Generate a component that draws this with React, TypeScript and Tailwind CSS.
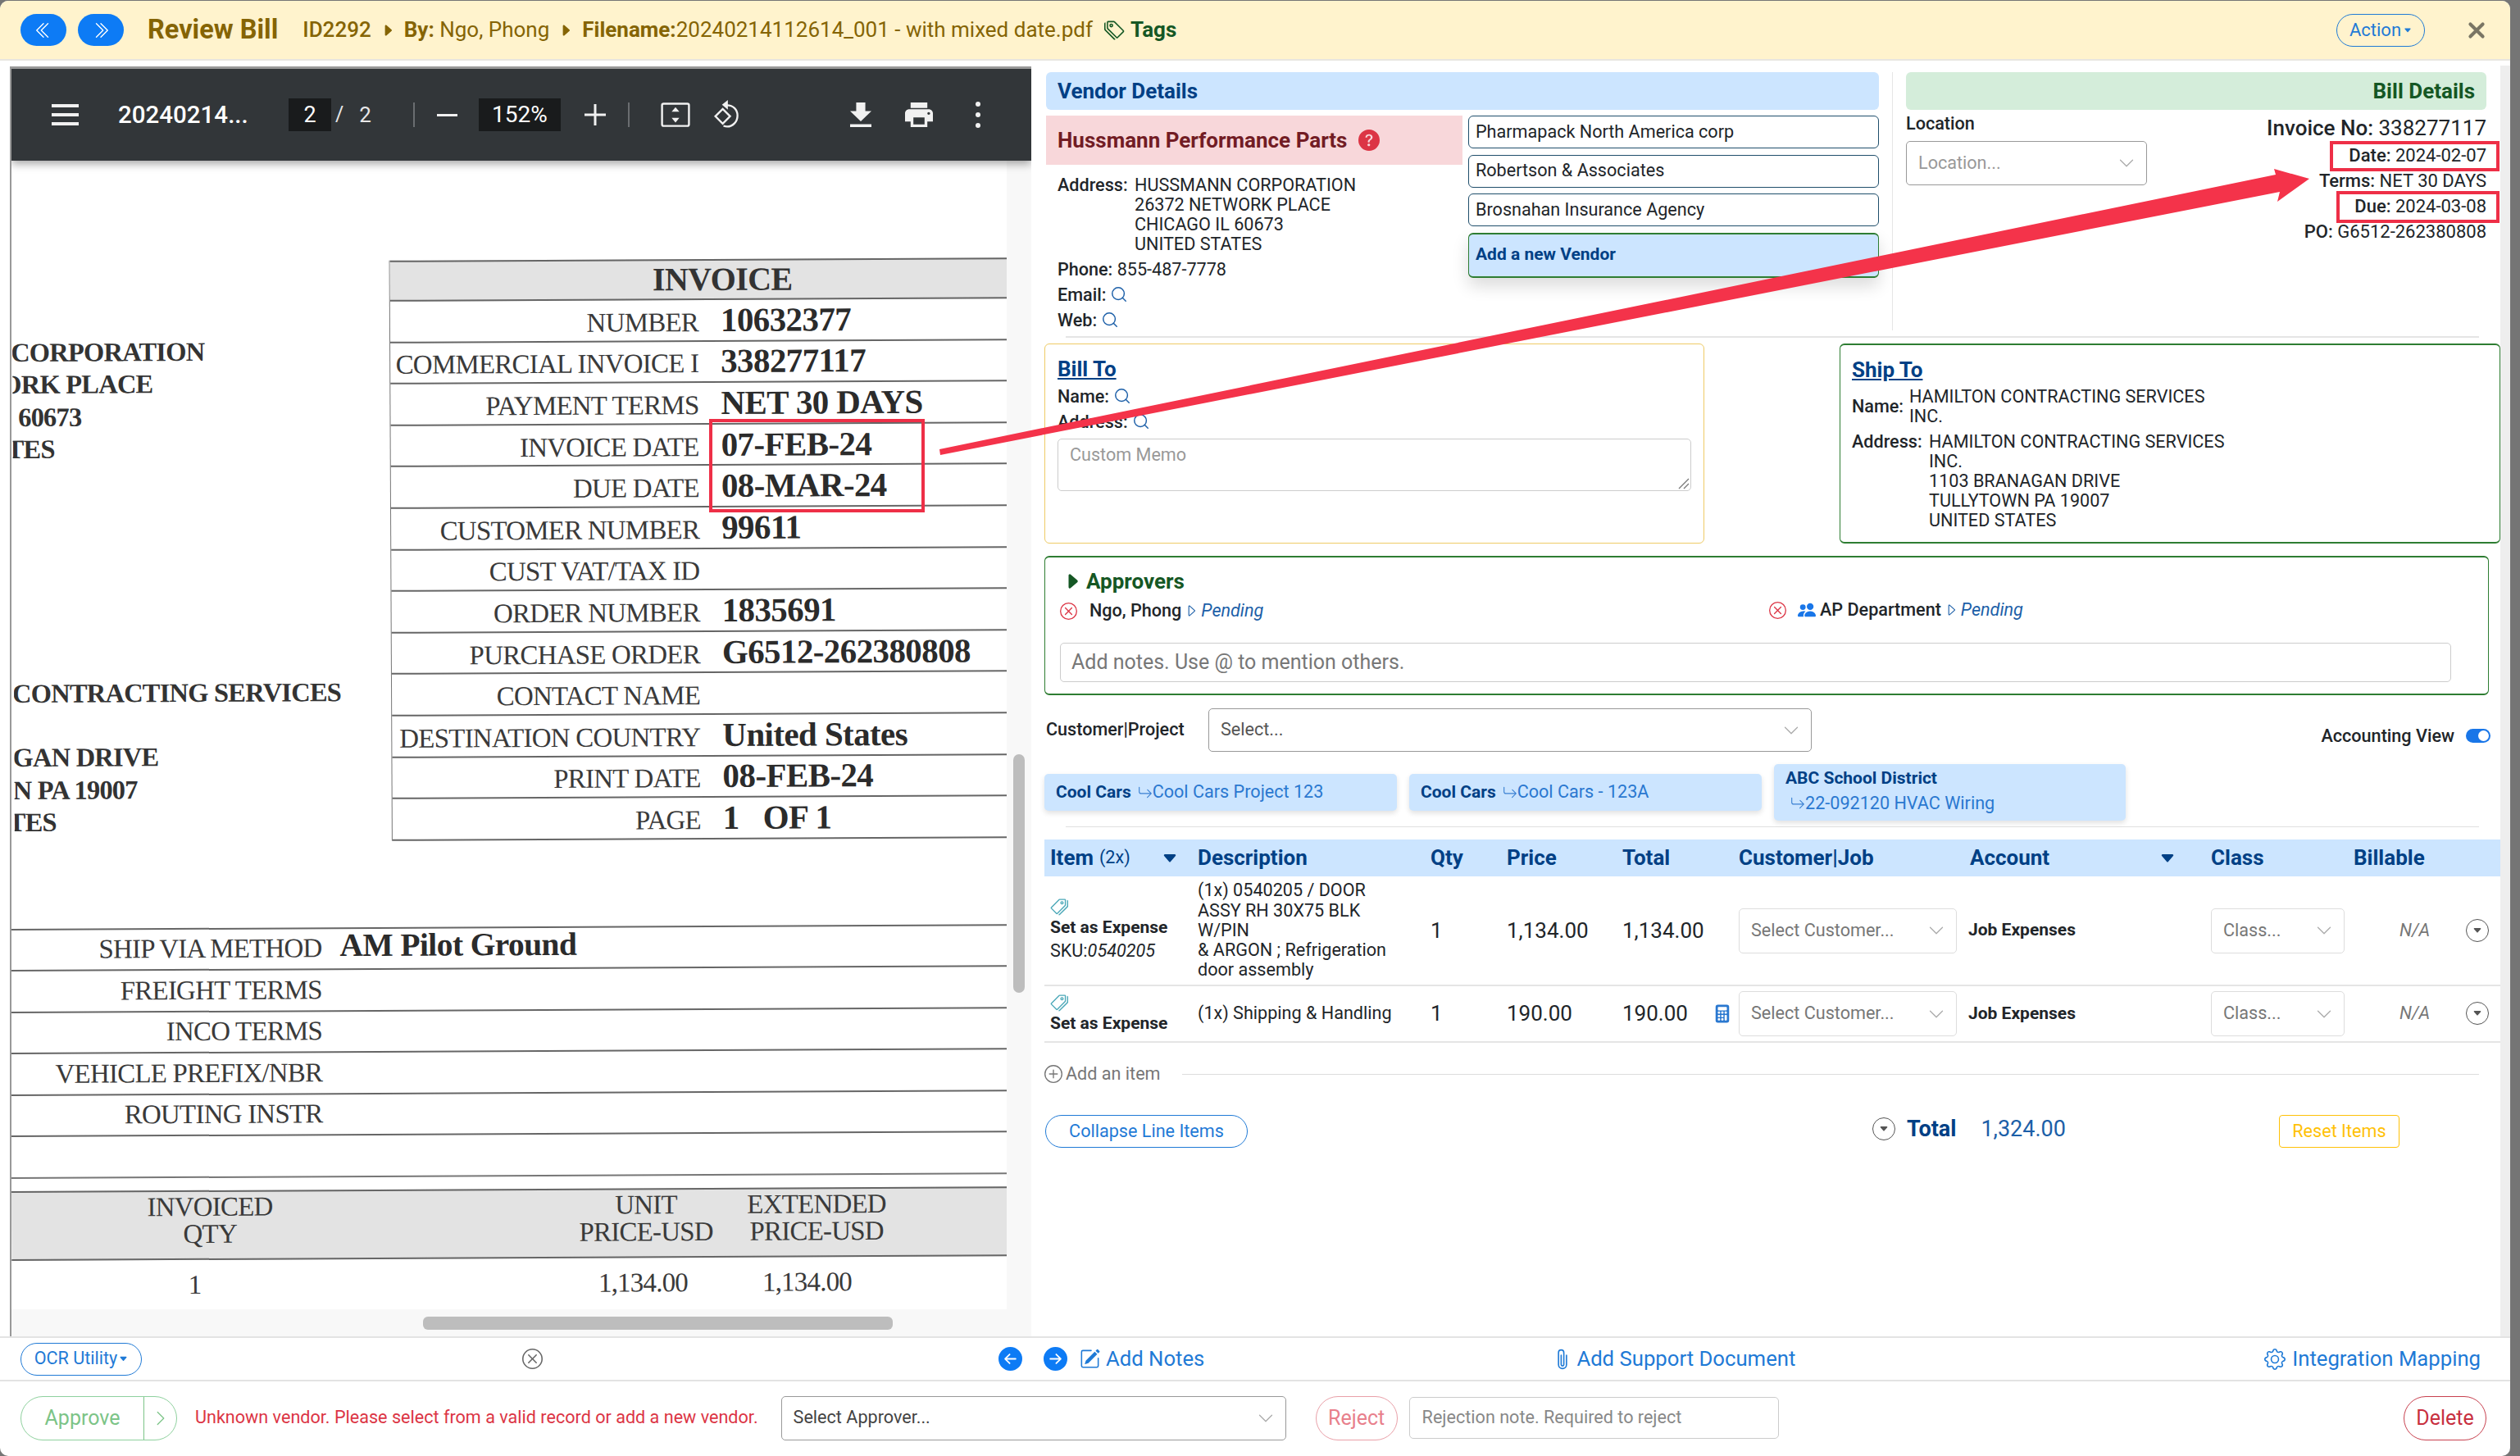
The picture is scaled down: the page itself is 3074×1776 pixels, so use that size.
import React from "react";
import {
  BsChevronDoubleLeft, BsChevronDoubleRight, BsCaretRightFill, BsCaretRight, BsTags, BsCaretDownFill,
  BsQuestionCircleFill, BsChevronDown, BsChevronRight, BsXCircle, BsPeopleFill, BsArrowReturnRight,
  BsPlusCircle, BsCalculatorFill, BsArrowLeftCircleFill, BsArrowRightCircleFill, BsPencilSquare,
  BsPaperclip, BsGear, BsXLg,
} from "react-icons/bs";
import { Search } from "lucide-react";

const topRows: [string, string][] = [
  ["NUMBER", "10632377"],
  ["COMMERCIAL INVOICE I", "338277117"],
  ["PAYMENT TERMS", "NET 30 DAYS"],
  ["INVOICE DATE", "07-FEB-24"],
  ["DUE DATE", "08-MAR-24"],
  ["CUSTOMER NUMBER", "99611"],
  ["CUST VAT/TAX ID", ""],
  ["ORDER NUMBER", "1835691"],
  ["PURCHASE ORDER", "G6512-262380808"],
  ["CONTACT NAME", ""],
  ["DESTINATION COUNTRY", "United States"],
  ["PRINT DATE", "08-FEB-24"],
  ["PAGE", "1\u00a0\u00a0 OF 1"],
];
const shipRows: [string, string][] = [
  ["SHIP VIA METHOD", "AM Pilot Ground"],
  ["FREIGHT TERMS", ""],
  ["INCO TERMS", ""],
  ["VEHICLE PREFIX/NBR", ""],
  ["ROUTING INSTR", ""],
];

function Mag() {
  return <Search className="inline-block w-[22px] h-[22px] ml-[5px] text-[#1c5fa8] align-[-3px]" strokeWidth={1.6} />;
}

function CircleCaret({ className = "" }: { className?: string }) {
  return (
    <span className={"inline-flex items-center justify-center w-[28px] h-[28px] rounded-full border border-[#555] text-[#555] " + className}>
      <BsCaretDownFill className="w-[12px] h-[12px]" />
    </span>
  );
}

function SelectBox({ label, w, cls }: { label: string; w: string; cls?: string }) {
  return (
    <div className={"flex items-center justify-between bg-white rounded-[5px] pl-[14px] pr-[14px] " + w + " " + (cls ?? "")}>
      <span className="truncate">{label}</span>
      <BsChevronDown className="w-[20px] h-[20px] text-[#aaa] shrink-0" />
    </div>
  );
}

function Toolbar() {
  return (
    <div className="relative z-10 h-[112px] shrink-0 bg-[#323639] text-white flex items-center shadow-[0_4px_10px_rgba(0,0,0,0.35)]">
      <div className="ml-[49px] w-[33px] flex flex-col gap-[7px]">
        <span className="h-[4px] bg-[#f1f1f1]" />
        <span className="h-[4px] bg-[#f1f1f1]" />
        <span className="h-[4px] bg-[#f1f1f1]" />
      </div>
      <span className="ml-[48px] w-[160px] text-[29.500px] font-medium whitespace-nowrap">20240214...</span>
      <span className="ml-[48px] w-[52px] h-[40px] bg-[#191b1c] flex items-center justify-center text-[27px]">2</span>
      <span className="ml-[5px] text-[25px] text-[#e8e8e8]">/</span>
      <span className="ml-[19px] text-[26px] text-[#e8e8e8]">2</span>
      <span className="ml-[51px] w-[2px] h-[30px] bg-[#6a6d70]" />
      <span className="ml-[27px] w-[25px] h-[3px] bg-[#f1f1f1]" />
      <span className="ml-[26px] w-[100px] h-[40px] bg-[#191b1c] flex items-center justify-center text-[28px]">152%</span>
      <svg className="ml-[29px] w-[26px] h-[26px]" viewBox="0 0 26 26"><path d="M11.5 0h3v11.5H26v3H14.500V26h-3V14.500H0v-3h11.5z" fill="#f1f1f1" /></svg>
      <span className="ml-[27px] w-[2px] h-[30px] bg-[#6a6d70]" />
      <svg className="ml-[38px] w-[36px] h-[30px]" viewBox="0 0 38 32">
        <rect x="1.5" y="1.5" width="35" height="29" rx="2" fill="none" stroke="#f1f1f1" strokeWidth="2.6" />
        <path d="M19 6l5 6H14zM19 26l-5-6h10z" fill="#f1f1f1" />
      </svg>
      <svg className="ml-[27px] w-[36px] h-[36px]" viewBox="0 0 38 40">
        <path d="M3 22l10-10 10 10-10 10z" fill="none" stroke="#f1f1f1" strokeWidth="2.6" />
        <path d="M19 7c8 0 14 6 14 14s-6 15-14 15c-2 0-3-.3-5-1" fill="none" stroke="#f1f1f1" strokeWidth="2.6" />
        <path d="M20 0v13l-8-6.500z" fill="#f1f1f1" />
      </svg>
      <svg className="ml-[132px] w-[26px] h-[30px]" viewBox="5 3 14 17" preserveAspectRatio="none"><path d="M19 9h-4V3H9v6H5l7 7 7-7zM5 18v2h14v-2H5z" fill="#f1f1f1" /></svg>
      <svg className="ml-[41px] w-[34px] h-[30px]" viewBox="2 3 20 18" preserveAspectRatio="none"><path d="M19 8H5c-1.660 0-3 1.340-3 3v6h4v4h12v-4h4v-6c0-1.660-1.340-3-3-3zm-3 11H8v-5h8v5zm3-7c-.55 0-1-.45-1-1s.45-1 1-1 1 .45 1 1-.45 1-1 1zm-1-9H6v4h12V3z" fill="#f1f1f1" /></svg>
      <div className="ml-[52px] flex flex-col gap-[7px]">
        <span className="w-[6px] h-[6px] rounded-full bg-[#f1f1f1]" />
        <span className="w-[6px] h-[6px] rounded-full bg-[#f1f1f1]" />
        <span className="w-[6px] h-[6px] rounded-full bg-[#f1f1f1]" />
      </div>
    </div>
  );
}

function Scan() {
  const lab = "font-['Liberation_Serif',serif] text-[#3a3a3a] text-[33px] tracking-[-0.8px] leading-none";
  const val = "font-['Liberation_Serif',serif] font-bold text-[#2b2b2b] text-[41px] tracking-[-0.6px] leading-none";
  const left = "font-['Liberation_Serif',serif] font-bold text-[#333] text-[32.500px] tracking-[-0.8px] leading-[39.300px] whitespace-nowrap";
  return (
    <div className="flex-1 bg-white overflow-hidden h-[1401px]">
      <div className="origin-top-left rotate-[-0.27deg] w-[1240px]">
        <div className="pt-[124px] flex">
          <div className="w-[460px] shrink-0 overflow-hidden">
            <div className={"mt-[91px] -ml-[2px] " + left}>
              <div>CORPORATION</div>
              <div className="-ml-[12px]">ORK PLACE</div>
              <div className="-ml-[6px]">, 60673</div>
              <div className="-ml-[6px]">TES</div>
              <div className="mt-[259px]">CONTRACTING SERVICES</div>
              <div className="mt-[39px]">GAN DRIVE</div>
              <div>N PA 19007</div>
              <div className="-ml-[6px]">TES</div>
            </div>
          </div>
          <div className="w-[780px] border-l border-[#777]">
            <div className="h-[50px] bg-[#e3e3e3] border-y-2 border-[#666] flex items-center justify-center pl-[32px]">
              <span className="font-['Liberation_Serif',serif] font-bold text-[#333] text-[40px] tracking-[-0.6px]">INVOICE</span>
            </div>
            {topRows.map(([a, b]) => (
              <div key={a} className="h-[50.600px] border-b-2 border-[#666] flex items-center">
                <div className={"w-[376px] text-right whitespace-nowrap " + lab + " pt-[6px]"}>{a}</div>
                <div className={"ml-[27px] whitespace-nowrap " + val}>{b}</div>
              </div>
            ))}
          </div>
        </div>
        <div className="mt-[105px] -ml-[6px] border-t-2 border-[#666]">
          {shipRows.map(([a, b]) => (
            <div key={a} className="h-[50.500px] border-b-2 border-[#666] flex items-center">
              <div className={"w-[380px] text-right whitespace-nowrap " + lab}>{a}</div>
              <div className={"ml-[22px] whitespace-nowrap -mt-[6px] " + val.replace("text-[41px]", "text-[39.500px]")}>{b}</div>
            </div>
          ))}
          <div className="h-[51px] border-b-2 border-[#777]" />
          <div className="h-[15px]" />
          <div className="h-[85px] bg-[#e3e3e3] border-y-2 border-[#666] flex items-center pb-[12px]">
            <div className={"w-[240px] ml-[122px] text-center " + lab + " leading-[36px]"}>INVOICED<br />QTY</div>
            <div className={"w-[180px] ml-[322px] text-center " + lab + " leading-[36px]"}>UNIT<br />PRICE-USD</div>
            <div className={"w-[180px] ml-[28px] text-center " + lab + " leading-[36px]"}>EXTENDED<br />PRICE-USD</div>
          </div>
          <div className="h-[60px] flex items-center">
            <div className={"w-[40px] ml-[203px] text-center " + lab}>1</div>
            <div className={"w-[180px] ml-[437px] text-center " + lab}>1,134.00</div>
            <div className={"w-[180px] ml-[20px] text-center " + lab}>1,134.00</div>
          </div>
        </div>
      </div>
    </div>
  );
}

function PdfPane() {
  return (
    <div className="w-[1246px] ml-[12px] mt-[7px] shrink-0 border-t-[3px] border-t-[#999] border-l-2 border-l-[#999] flex flex-col overflow-hidden">
      <Toolbar />
      <div className="flex flex-1 min-h-0 bg-[#f8f8f8]">
        <Scan />
        <div className="w-[30px] shrink-0 pt-[724px] pl-[8px]">
          <div className="w-[14px] h-[291px] rounded-[7px] bg-[#bdbdbd]" />
        </div>
      </div>
      <div className="h-[31px] bg-[#f8f8f8] pl-[502px] pt-[7px] shrink-0">
        <div className="w-[573px] h-[16px] rounded-[6px] bg-[#bdbdbd]" />
      </div>
    </div>
  );
}

function VendorBlock() {
  return (
    <div className="w-[1016px] ml-[2px] shrink-0">
      <div className="h-[46px] bg-[#cce5ff] rounded-[6px] flex items-center pl-[14px] text-[#004085] font-bold text-[26px]">Vendor Details</div>
      <div className="flex mt-[7px]">
        <div className="w-[508px] shrink-0">
          <div className="h-[60px] bg-[#f8d7da] text-[#721c24] font-bold text-[26px] flex items-center pl-[14px]">
            Hussmann Performance Parts
            <BsQuestionCircleFill className="ml-[14px] w-[26px] h-[26px] text-[#dc3545]" />
          </div>
          <div className="pl-[14px] mt-[13px] text-[21.600px] leading-[24px] text-[#212529]">
            <div className="flex">
              <span className="font-medium w-[94px] shrink-0">Address:</span>
              <span>HUSSMANN CORPORATION<br />26372 NETWORK PLACE<br />CHICAGO IL 60673<br />UNITED STATES</span>
            </div>
            <div className="mt-[7px]"><span className="font-medium">Phone:</span> 855-487-7778</div>
            <div className="mt-[7px]"><span className="font-medium">Email:</span><Mag /></div>
            <div className="mt-[7px]"><span className="font-medium">Web:</span><Mag /></div>
          </div>
        </div>
        <div className="ml-[7px] w-[501px] flex flex-col gap-[7.500px] text-[21.600px] text-[#212529]">
          {["Pharmapack North America corp", "Robertson & Associates", "Brosnahan Insurance Agency"].map((t) => (
            <div key={t} className="h-[40px] border border-[#1f4e6b] rounded-[6px] flex items-center pl-[8px] bg-white">{t}</div>
          ))}
          <div className="h-[55px] bg-[#cce5ff] border border-[#2e7d32] border-y-2 rounded-[6px] flex items-center pl-[8px] text-[#004085] font-bold text-[21px] shadow-[0_10px_20px_rgba(0,0,0,0.14)]">Add a new Vendor</div>
        </div>
      </div>
    </div>
  );
}

function BillBlock() {
  return (
    <div className="flex-1 ml-[16px] border-l border-[#e5e5e5] pl-[16px] h-[315px]">
      <div className="w-[708px]">
        <div className="h-[46px] bg-[#d4edda] rounded-[6px] flex items-center justify-end pr-[14px] text-[#155724] font-bold text-[26px]">Bill Details</div>
        <div className="flex justify-between mt-[7px]">
          <div>
            <div className="text-[21.600px] font-medium text-[#212529] -mt-[6px]">Location</div>
            <SelectBox label="Location..." w="w-[294px]" cls="h-[54px] mt-[5px] border border-[#999] text-[#999] text-[21.600px]" />
          </div>
          <div className="text-right text-[22px] text-[#212529]">
            <div className="text-[26px] leading-[30px]"><span className="font-medium">Invoice No:</span> 338277117</div>
            <div className="leading-[24px] mt-[7px]"><span className="font-medium">Date:</span> 2024-02-07</div>
            <div className="leading-[24px] mt-[7px]"><span className="font-medium">Terms:</span> NET 30 DAYS</div>
            <div className="leading-[24px] mt-[7px]"><span className="font-medium">Due:</span> 2024-03-08</div>
            <div className="leading-[24px] mt-[7px]"><span className="font-medium">PO:</span> G6512-262380808</div>
          </div>
        </div>
      </div>
    </div>
  );
}

function AddressBoxes() {
  return (
    <div className="flex justify-between mt-[7px] text-[21.600px] leading-[24px] text-[#212529]">
      <div className="w-[805px] h-[244px] border border-[#eecb66] rounded-[6px] px-[15px] pt-[15px]">
        <div className="text-[#004085] font-bold text-[26px] underline leading-[30px]">Bill To</div>
        <div className="mt-[7px]"><span className="font-medium">Name:</span><Mag /></div>
        <div className="mt-[7px]"><span className="font-medium">Address:</span><Mag /></div>
        <div className="mt-[8px] h-[64px] border border-[#ccc] rounded-[5px] pl-[14px] pt-[7px] text-[#999] relative">
          Custom Memo
          <svg className="absolute right-[1px] bottom-[1px] w-[14px] h-[14px]" viewBox="0 0 14 14"><path d="M13 1L1 13M13 7l-6 6" stroke="#777" strokeWidth="1.300" /></svg>
        </div>
      </div>
      <div className="w-[806px] h-[244px] border border-y-2 border-[#2e7d32] rounded-[6px] pl-[14px] pt-[15px]">
        <div className="text-[#004085] font-bold text-[26px] underline leading-[30px]">Ship To</div>
        <div className="flex items-center mt-[6px]">
          <span className="font-medium w-[70px] shrink-0">Name:</span>
          <span className="w-[370px]">HAMILTON CONTRACTING SERVICES INC.</span>
        </div>
        <div className="flex mt-[7px]">
          <span className="font-medium w-[94px] shrink-0">Address:</span>
          <span className="w-[370px]">HAMILTON CONTRACTING SERVICES INC.<br />1103 BRANAGAN DRIVE<br />TULLYTOWN PA 19007<br />UNITED STATES</span>
        </div>
      </div>
    </div>
  );
}

function Approver({ people, name }: { people?: boolean; name: string }) {
  return (
    <div className="flex items-center text-[21.600px]">
      <BsXCircle className="w-[21px] h-[21px] text-[#dc3545] mr-[15px]" />
      {people && <BsPeopleFill className="w-[22px] h-[22px] text-[#1976e8] mr-[5px] -ml-[1px]" />}
      <span className="font-medium text-[#212529]">{name}</span>
      <BsCaretRight className="w-[18px] h-[18px] text-[#1c5fa8] mx-[3px]" />
      <span className="italic text-[#1c5fa8]">Pending</span>
    </div>
  );
}

function Approvers() {
  return (
    <div className="w-[1762px] h-[170px] mt-[15px] border border-y-2 border-[#2e7d32] rounded-[6px] pl-[18px] pt-[14px]">
      <div className="flex items-center text-[#155724] font-bold text-[26px] leading-[30px] pl-[6px]">
        <BsCaretRightFill className="w-[24px] h-[24px] text-[#155724] mr-[5px] -ml-[3px]" />
        Approvers
      </div>
      <div className="flex mt-[5px] h-[30px]">
        <div className="w-[865px]"><Approver name="Ngo, Phong" /></div>
        <Approver people name="AP Department" />
      </div>
      <div className="mt-[25px] w-[1697px] h-[48px] border border-[#ccc] rounded-[5px] flex items-center pl-[13px] text-[25px] text-[#777]">
        Add notes. Use @ to mention others.
      </div>
    </div>
  );
}

function CustomerRow() {
  return (
    <>
      <div className="flex mt-[16px] ml-[2px] w-[1762px] items-center">
        <span className="w-[198px] text-[21.600px] font-medium text-[#212529] shrink-0">Customer|Project</span>
        <SelectBox label="Select..." w="w-[736px]" cls="h-[53px] border border-[#999] text-[#555] text-[21.600px]" />
        <span className="ml-auto text-[21.600px] font-medium text-[#212529] mt-[16px]">Accounting View</span>
        <span className="ml-[14px] mt-[14px] w-[30px] h-[17px] rounded-full bg-[#1976e8] flex items-center justify-end pr-[2px]">
          <span className="w-[13px] h-[13px] rounded-full bg-white" />
        </span>
      </div>
      <div className="flex items-center gap-[15px] mt-[15px] h-[69px]">
        {[["Cool Cars", "Cool Cars Project 123"], ["Cool Cars", "Cool Cars - 123A"]].map(([a, b]) => (
          <div key={b} className="w-[430px] h-[45px] bg-[#cce5ff] rounded-[5px] flex items-center pl-[14px] text-[21.600px] shadow-[0_3px_6px_rgba(0,0,0,0.12)]">
            <span className="font-bold text-[21px] text-[#004085]">{a}</span>
            <BsArrowReturnRight className="w-[18px] h-[18px] text-[#3a80d2] ml-[8px]" />
            <span className="text-[#2a78d0]">{b}</span>
          </div>
        ))}
        <div className="w-[429px] h-[69px] bg-[#cce5ff] rounded-[5px] pl-[14px] pt-[2px] text-[21.600px] leading-[30px] shadow-[0_3px_6px_rgba(0,0,0,0.12)]">
          <div className="font-bold text-[21px] text-[#004085]">ABC School District</div>
          <div className="flex items-center pl-[6px] pt-[1px] text-[#2a78d0]">
            <BsArrowReturnRight className="w-[18px] h-[18px] text-[#3a80d2]" />22-092120 HVAC Wiring
          </div>
        </div>
      </div>
      <div className="h-[1px] bg-[#e0e0e0] mt-[7px] ml-[26px] w-[1724px]" />
    </>
  );
}

function Tag() {
  return <BsTags className="w-[22px] h-[22px] text-[#4ba8b8] -scale-x-100" />;
}

function LineItem({ desc, sku, price, calc, h }: { desc: React.ReactNode; sku?: boolean; price: string; calc?: boolean; h: string }) {
  return (
    <div className={"grid grid-cols-[187px_284px_93px_141px_142px_280px_296px_174px_179px] items-center border-b-2 border-[#e5e5e5] text-[21.600px] text-[#212529] " + h}>
      <div className="pl-[7px]">
        <Tag />
        <div className="font-bold text-[21px] leading-[28px]">Set as Expense</div>
        {sku && <div className="leading-[30px]">SKU:<span className="italic">0540205</span></div>}
      </div>
      <div className="leading-[24.300px]">{desc}</div>
      <div className="text-[26px]">1</div>
      <div className="text-[26px]">{price}</div>
      <div className="text-[26px] flex items-center relative">
        {price}
        {calc && <BsCalculatorFill className="absolute left-[111px] w-[22px] h-[25px] text-[#2a78d0]" />}
      </div>
      <SelectBox label="Select Customer..." w="w-[266px]" cls="h-[55px] border border-[#ddd] text-[#777]" />
      <div className="font-bold text-[21px]">Job Expenses</div>
      <SelectBox label="Class..." w="w-[163px]" cls="h-[55px] border border-[#ddd] text-[#777]" />
      <div className="flex items-center">
        <span className="italic text-[#777] ml-[56px]">N/A</span>
        <CircleCaret className="ml-[44px]" />
      </div>
    </div>
  );
}

function ItemsTable() {
  return (
    <>
      <div className="mt-[15px] h-[45px] bg-[#cce5ff] grid grid-cols-[187px_284px_93px_141px_142px_283px_293px_174px_179px] items-center text-[26px] font-bold text-[#004085]">
        <div className="pl-[7px] flex items-center">Item<span className="font-normal text-[21.600px] ml-[7px]">(2x)</span><BsCaretDownFill className="w-[20px] h-[20px] ml-[38px]" /></div>
        <div>Description</div>
        <div>Qty</div>
        <div>Price</div>
        <div>Total</div>
        <div>Customer|Job</div>
        <div className="flex items-center justify-between -ml-[1px] pr-[43px]">Account<BsCaretDownFill className="w-[20px] h-[20px]" /></div>
        <div>Class</div>
        <div>Billable</div>
      </div>
      <LineItem h="h-[134px]" sku price="1,134.00" desc={<>(1x) 0540205 / DOOR<br />ASSY RH 30X75 BLK<br />W/PIN<br />&amp; ARGON ; Refrigeration<br />door assembly</>} />
      <LineItem h="h-[69px]" calc price="190.00" desc="(1x) Shipping & Handling" />
      <div className="flex items-center mt-[26px] h-[24px] text-[21.600px] text-[#777]">
        <BsPlusCircle className="w-[22px] h-[22px] text-[#777] mr-[4px]" />
        Add an item
        <span className="h-[1px] bg-[#ddd] ml-[26px] w-[1582px]" />
      </div>
      <div className="flex items-center mt-[38px]">
        <div className="w-[247px] h-[40px] ml-[1px] rounded-full border border-[#1f7ad6] flex items-center justify-center text-[21.600px] text-[#1f7ad6]">Collapse Line Items</div>
        <CircleCaret className="ml-[762px] -mt-[6px]" />
        <span className="ml-[14px] text-[27px] font-bold text-[#004085] -mt-[6px]">Total</span>
        <span className="ml-[30px] text-[27px] text-[#1c5fa8] -mt-[6px]">1,324.00</span>
        <div className="ml-[260px] w-[147px] h-[40px] rounded-[4px] border border-[#ffc107] flex items-center justify-center text-[21.600px] text-[#ffc107]">Reset Items</div>
      </div>
    </>
  );
}

function DetailPane() {
  return (
    <div className="flex-1 flex min-w-0">
      <div className="w-[1792px] shrink-0 pl-[16px] pt-[14px]">
        <div className="flex">
          <VendorBlock />
          <BillBlock />
        </div>
        <div className="h-[2px] bg-[#e5e5e5] mt-[7px] ml-[26px] w-[1724px]" />
        <AddressBoxes />
        <Approvers />
        <CustomerRow />
        <ItemsTable />
      </div>
      <div className="flex-1 bg-[#eee] mt-[6px]" />
    </div>
  );
}

function Annotations() {
  const red = "absolute border-[4px] border-[#ee2f47]";
  return (
    <>
      <div className={red + " left-[865px] top-[510px] w-[263px] h-[114px]"} />
      <div className={red + " left-[2842px] top-[171px] w-[207px] h-[37px]"} />
      <div className={red + " left-[2850px] top-[232px] w-[199px] h-[39px]"} />
      <svg className="absolute left-0 top-0 w-[3062px] h-[1775px] pointer-events-none" viewBox="0 0 3062 1775">
        <path d="M1146 547L2776 212 2774 205 2817 217 2778 245 2781 233 1147 554Z" fill="#f4334a" />
      </svg>
    </>
  );
}

export default function App() {
  return (
    <div className="w-[3074px] h-[1776px] bg-[#757575] overflow-hidden font-['Roboto',sans-serif] pt-[1px]">
      <div className="w-[3062px] h-[1775px] bg-white rounded-[10px] overflow-hidden flex flex-col relative">
        <header className="h-[73px] shrink-0 bg-[#fff3cd] border-b-2 border-[#e8e6e0] flex items-center pl-[25px] pr-[30px] text-[#856404] text-[26px]">
          <span className="w-[56px] h-[39px] rounded-full bg-[#0d7bf5] flex items-center justify-center text-white"><BsChevronDoubleLeft className="w-[22px] h-[22px]" /></span>
          <span className="ml-[14px] w-[56px] h-[39px] rounded-full bg-[#0d7bf5] flex items-center justify-center text-white"><BsChevronDoubleRight className="w-[22px] h-[22px]" /></span>
          <span className="ml-[29px] text-[32.500px] font-bold">Review Bill</span>
          <span className="ml-[30px] font-medium">ID2292</span>
          <BsCaretRightFill className="w-[18px] h-[18px] mx-[11px]" />
          <span><span className="font-bold">By:</span> Ngo, Phong</span>
          <BsCaretRightFill className="w-[18px] h-[18px] mx-[11px]" />
          <span><span className="font-bold">Filename:</span>20240214112614_001 - with mixed date.pdf</span>
          <BsTags className="w-[25px] h-[25px] ml-[14px] text-[#155724]" />
          <span className="ml-[7px] font-bold text-[#155724]">Tags</span>
          <span className="ml-auto w-[108px] h-[40px] rounded-full border border-[#1f7ad6] flex items-center justify-center text-[22px] text-[#1f7ad6]">
            Action<BsCaretDownFill className="w-[10px] h-[10px] ml-[3px]" />
          </span>
          <BsXLg className="ml-[52px] w-[22px] h-[22px] text-[#7a7564] stroke-[2px]" />
        </header>
        <div className="flex flex-1 min-h-0">
          <PdfPane />
          <DetailPane />
        </div>
        <div className="h-[55px] shrink-0 border-y-2 border-[#e3e3e3] flex items-center pl-[25px] pr-[36px] text-[25.700px] text-[#1f7ad6]">
          <span className="w-[148px] h-[40px] rounded-full border border-[#1f7ad6] flex items-center justify-center text-[21.600px]">OCR Utility<BsCaretDownFill className="w-[11px] h-[11px] ml-[2px]" /></span>
          <BsXCircle className="ml-[464px] w-[25px] h-[25px] text-[#666]" />
          <BsArrowLeftCircleFill className="ml-[556px] w-[29px] h-[29px] text-[#0d7bf5]" />
          <BsArrowRightCircleFill className="ml-[26px] w-[29px] h-[29px] text-[#0d7bf5]" />
          <BsPencilSquare className="ml-[15px] w-[25px] h-[25px]" />
          <span className="ml-[7px]">Add Notes</span>
          <BsPaperclip className="ml-[424px] w-[26px] h-[26px]" />
          <span className="ml-[4px]">Add Support Document</span>
          <BsGear className="ml-auto w-[26px] h-[26px]" />
          <span className="ml-[8px]">Integration Mapping</span>
        </div>
        <div className="h-[91px] shrink-0 flex items-center pl-[25px] pr-[29px] pb-[2px] text-[21.600px]">
          <div className="w-[191px] h-[54px] rounded-full border border-[#8fd19e] flex items-center text-[#7cc487] text-[25px]">
            <span className="w-[150px] text-center border-r border-[#7cc487] h-full flex items-center justify-center">Approve</span>
            <BsChevronRight className="ml-[10px] w-[20px] h-[20px]" />
          </div>
          <span className="ml-[22px] text-[#dc3545] text-[21.600px] whitespace-nowrap">Unknown vendor. Please select from a valid record or add a new vendor.</span>
          <SelectBox label="Select Approver..." w="w-[616px] ml-[28px]" cls="h-[54px] border border-[#999] text-[#444]" />
          <span className="ml-[36px] w-[100px] h-[54px] rounded-full border border-[#e9a0a8] flex items-center justify-center text-[25px] text-[#e8808c]">Reject</span>
          <div className="ml-[14px] w-[451px] h-[51px] border border-[#ccc] rounded-[5px] flex items-center pl-[15px] text-[#888]">Rejection note. Required to reject</div>
          <span className="ml-auto w-[101px] h-[54px] rounded-full border border-[#c8414f] flex items-center justify-center text-[25px] text-[#c8303f]">Delete</span>
        </div>
        <Annotations />
      </div>
    </div>
  );
}
